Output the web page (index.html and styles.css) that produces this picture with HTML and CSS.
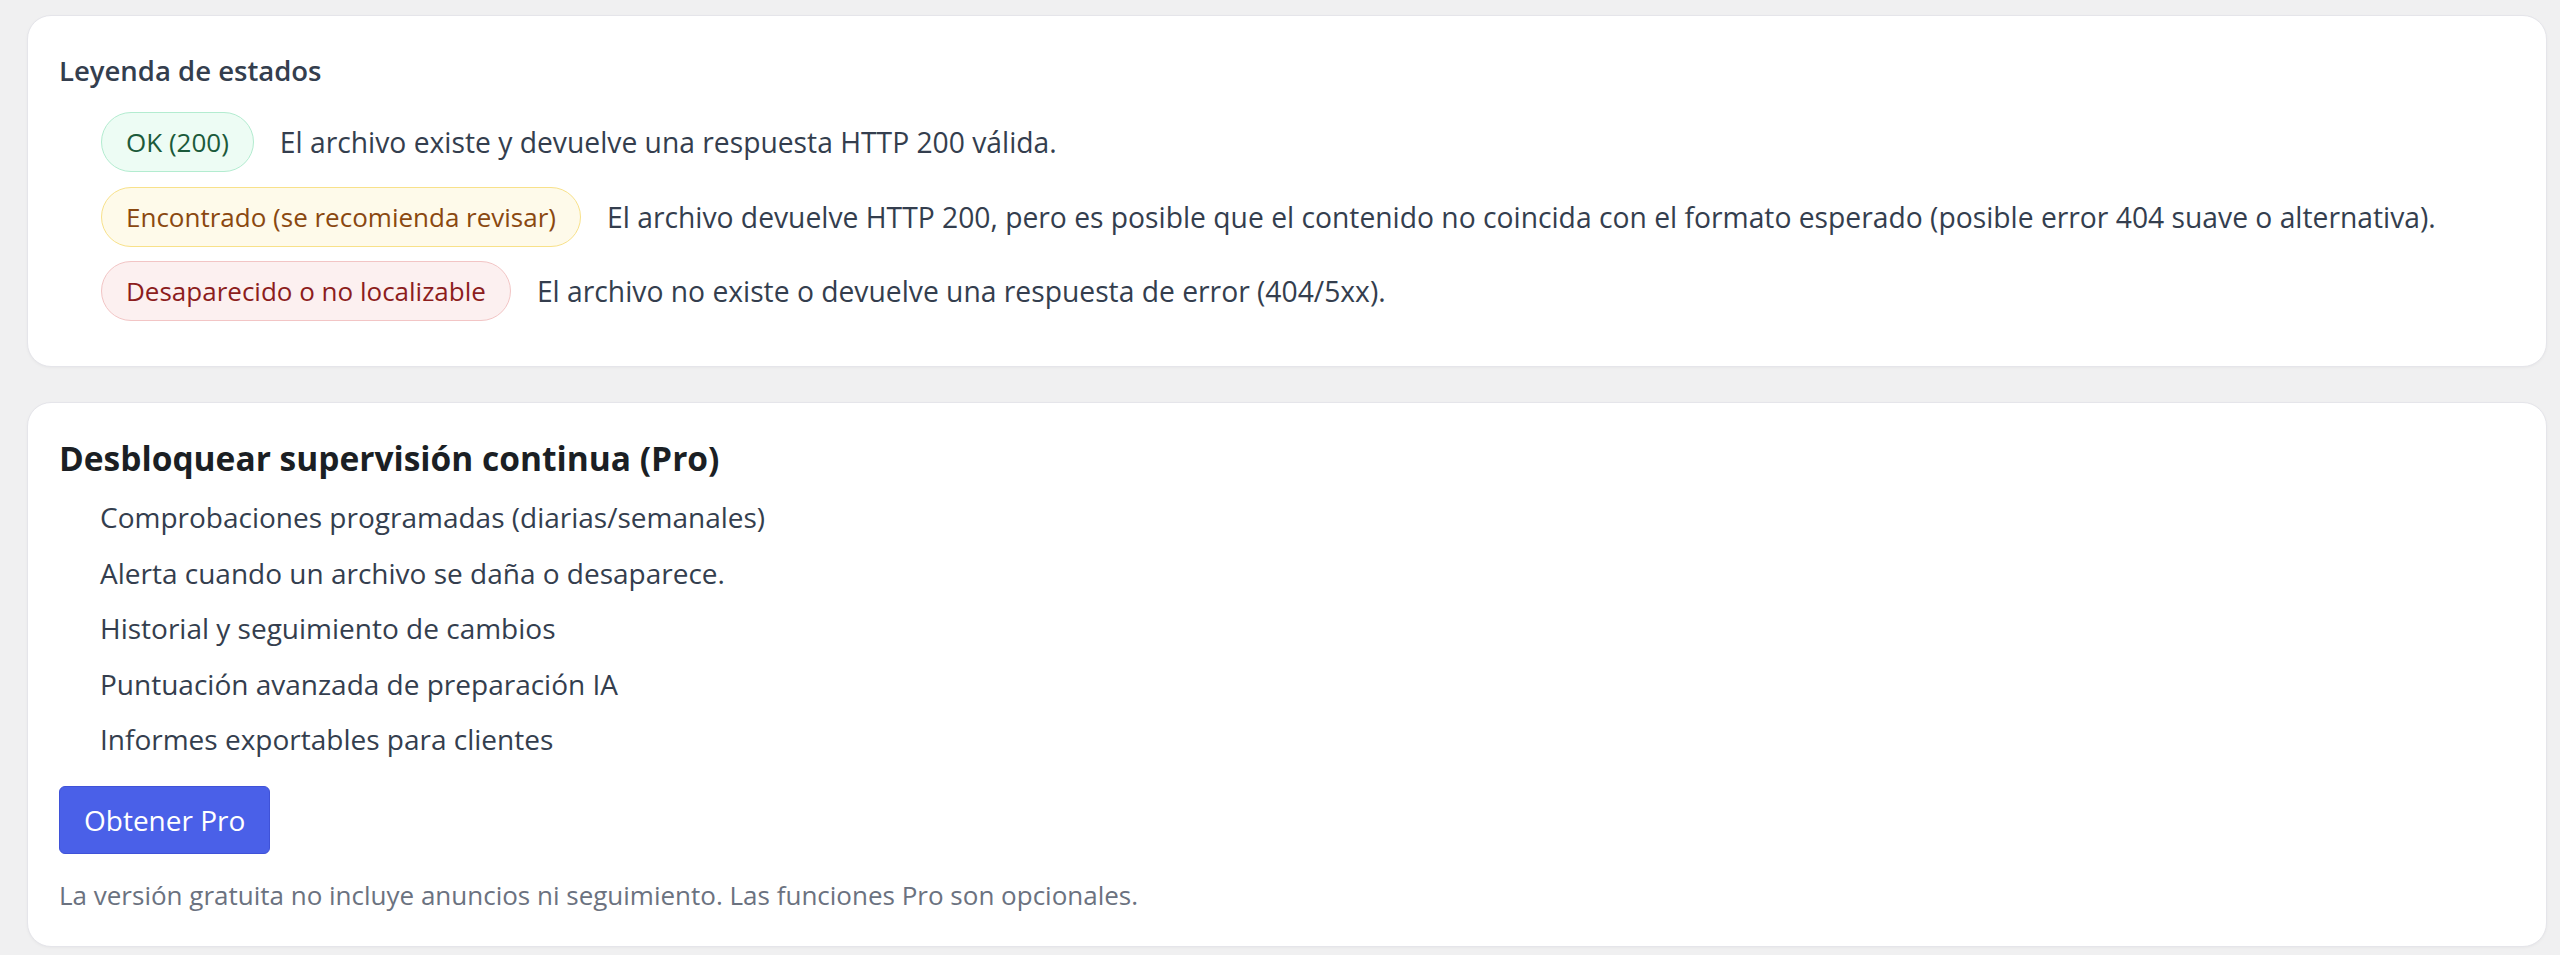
FILE: index.html
```html
<!DOCTYPE html>
<html lang="es">
<head>
<meta charset="utf-8">
<title>Estado de archivos</title>
<link rel="stylesheet" href="styles.css">
</head>
<body>
<main class="page">
  <section class="card legend">
    <h3 class="legend-title">Leyenda de estados</h3>
    <ul class="legend-list">
      <li class="legend-row">
        <span class="pill pill-ok">OK (200)</span>
        <span class="legend-desc">El archivo existe y devuelve una respuesta HTTP 200 válida.</span>
      </li>
      <li class="legend-row">
        <span class="pill pill-warn">Encontrado (se recomienda revisar)</span>
        <span class="legend-desc">El archivo devuelve HTTP 200, pero es posible que el contenido no coincida con el formato esperado (posible error 404 suave o alternativa).</span>
      </li>
      <li class="legend-row">
        <span class="pill pill-bad">Desaparecido o no localizable</span>
        <span class="legend-desc">El archivo no existe o devuelve una respuesta de error (404/5xx).</span>
      </li>
    </ul>
  </section>

  <section class="card pro">
    <h2 class="pro-title">Desbloquear supervisión continua (Pro)</h2>
    <ul class="pro-list">
      <li>Comprobaciones programadas (diarias/semanales)</li>
      <li>Alerta cuando un archivo se daña o desaparece.</li>
      <li>Historial y seguimiento de cambios</li>
      <li>Puntuación avanzada de preparación IA</li>
      <li>Informes exportables para clientes</li>
    </ul>
    <button class="btn-pro" type="button">Obtener Pro</button>
    <p class="pro-note">La versión gratuita no incluye anuncios ni seguimiento. Las funciones Pro son opcionales.</p>
  </section>
</main>
</body>
</html>
```
FILE: styles.css
```css
* { box-sizing: border-box; }

html, body {
  margin: 0;
  padding: 0;
  background: #f0f0f1;
}

body {
  font-family: "Open Sans", "Noto Sans", "Liberation Sans", sans-serif;
  color: #343e4e;
  font-size: 28px;
}

.page {
  display: flex;
  flex-direction: column;
  gap: 35px;
  padding: 15px 13px 8px 27px;
}

.card {
  background: #ffffff;
  border: 1px solid #e5e5ea;
  border-radius: 24px;
  padding: 33px 31px;
  box-shadow: 0 1px 3px rgba(0, 0, 0, 0.04);
}

/* Legend card */
.legend-title {
  margin: 0;
  font-size: 27.5px;
  line-height: 44px;
  font-weight: 600;
  color: #343e4e;
}

.legend-list {
  list-style: none;
  margin: 19px 0 12px 42px;
  padding: 0;
  display: flex;
  flex-direction: column;
  gap: 14.5px;
}

.legend-row {
  display: flex;
  align-items: center;
  gap: 26px;
}

.pill {
  display: inline-block;
  flex: none;
  font-size: 26px;
  line-height: 34px;
  padding: 12px 24px;
  border: 1px solid;
  border-radius: 999px;
  white-space: nowrap;
}

.pill-ok {
  background: #edfcf4;
  border-color: #b3ecd0;
  color: #1b5a3a;
}

.pill-warn {
  background: #fefaea;
  border-color: #f8e18a;
  color: #8a4810;
}

.pill-bad {
  background: #fcf0f0;
  border-color: #f2c5c5;
  color: #8c1d1d;
}

.legend-desc {
  font-size: 28.25px;
  line-height: 34px;
  color: #343e4e;
}

/* Pro card */
.pro-title {
  margin: 0;
  font-size: 33.5px;
  line-height: 44px;
  font-weight: 700;
  color: #1b1f24;
}

.pro-list {
  list-style: none;
  margin: 16px 0 26px 41px;
  padding: 0;
  display: flex;
  flex-direction: column;
  gap: 13.5px;
}

.pro-list li {
  font-size: 28px;
  line-height: 42px;
  color: #343e4e;
}

.btn-pro {
  display: block;
  font-family: inherit;
  font-size: 28px;
  line-height: 34px;
  padding: 16px 24px;
  color: #ffffff;
  background: #4a60e8;
  border: 1px solid #3f52d8;
  border-radius: 6px;
  cursor: pointer;
}

.pro-note {
  margin: 23px 0 0;
  font-size: 26px;
  line-height: 36px;
  color: #6b7280;
}
```
